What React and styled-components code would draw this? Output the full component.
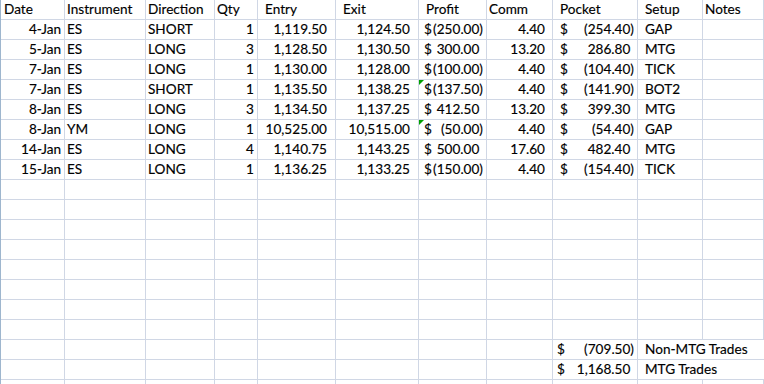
import React from 'react';
import styled, { createGlobalStyle } from 'styled-components';

const GlobalStyle = createGlobalStyle`
  html, body {
    margin: 0;
    padding: 0;
    background: #fff;
    overflow: hidden;
  }
`;

const COLS = '64px 81px 69px 43px 78px 83px 68px 66px 85px 65px 1fr';

const Sheet = styled.div`
  width: 764px;
  height: 384px;
  overflow: hidden;
  box-sizing: border-box;
  border-left: 1px solid #9eb6ce;
  font-family: Lato, "Liberation Sans", sans-serif;
  font-size: 13.6px;
  color: #000;
  -webkit-text-stroke: 0.15px #000;
`;

const Row = styled.div`
  display: grid;
  grid-template-columns: ${COLS};
  height: 20px;
`;

const Cell = styled.div`
  position: relative;
  box-sizing: border-box;
  height: 20px;
  line-height: 19px;
  white-space: nowrap;
  overflow: visible;
  border-bottom: 1px solid #d0d7e5;
  border-right: ${(p) => (p.$noRight ? 'none' : '1px solid #d0d7e5')};
  text-align: ${(p) => p.$align || 'left'};
  padding-left: ${(p) => p.$pl || 0}px;
  padding-right: ${(p) => p.$pr || 0}px;
  grid-column: ${(p) => (p.$span ? `span ${p.$span}` : 'auto')};
`;

const Acct = styled(Cell)`
  display: flex;
  justify-content: space-between;
`;

const Ghost = styled.span`
  visibility: hidden;
`;

const Flag = styled.span`
  position: absolute;
  top: 0;
  left: 0;
  width: 0;
  height: 0;
  border-top: 5px solid #00a000;
  border-right: 5px solid transparent;
`;

const headers = [
  { t: 'Date', pl: 3 },
  { t: 'Instrument', pl: 2 },
  { t: 'Direction', pl: 2 },
  { t: 'Qty', pl: 2 },
  { t: 'Entry', pl: 7 },
  { t: 'Exit', pl: 7 },
  { t: 'Profit', pl: 7 },
  { t: 'Comm', pl: 2 },
  { t: 'Pocket', pl: 7 },
  { t: 'Setup', pl: 7 },
  { t: 'Notes', pl: 2 },
];

const trades = [
  ['4-Jan', 'ES', 'SHORT', 1, '1,119.50', '1,124.50', '(250.00)', '4.40', '(254.40)', 'GAP'],
  ['5-Jan', 'ES', 'LONG', 3, '1,128.50', '1,130.50', '300.00', '13.20', '286.80', 'MTG'],
  ['7-Jan', 'ES', 'LONG', 1, '1,130.00', '1,128.00', '(100.00)', '4.40', '(104.40)', 'TICK'],
  ['7-Jan', 'ES', 'SHORT', 1, '1,135.50', '1,138.25', '(137.50)', '4.40', '(141.90)', 'BOT2', true],
  ['8-Jan', 'ES', 'LONG', 3, '1,134.50', '1,137.25', '412.50', '13.20', '399.30', 'MTG'],
  ['8-Jan', 'YM', 'LONG', 1, '10,525.00', '10,515.00', '(50.00)', '4.40', '(54.40)', 'GAP', true],
  ['14-Jan', 'ES', 'LONG', 4, '1,140.75', '1,143.25', '500.00', '17.60', '482.40', 'MTG'],
  ['15-Jan', 'ES', 'LONG', 1, '1,136.25', '1,133.25', '(150.00)', '4.40', '(154.40)', 'TICK'],
];

const Money = ({ value, pl, pr, flag }) => {
  const neg = value.startsWith('(');
  return (
    <Acct $pl={pl} $pr={pr}>
      {flag && <Flag />}
      <span>$</span>
      <span>
        {value}
        {!neg && <Ghost>)</Ghost>}
      </span>
    </Acct>
  );
};

const EmptyRow = () => (
  <Row>
    {headers.map((h) => (
      <Cell key={h.t} />
    ))}
  </Row>
);

const TradeRow = ({ trade }) => {
  const [date, inst, dir, qty, entry, exit, profit, comm, pocket, setup, flag] = trade;
  return (
    <Row>
      <Cell $align="right" $pr={3}>{date}</Cell>
      <Cell $pl={2}>{inst}</Cell>
      <Cell $pl={2}>{dir}</Cell>
      <Cell $align="right" $pr={3}>{qty}</Cell>
      <Cell $align="right" $pr={8}>{entry}</Cell>
      <Cell $align="right" $pr={8}>{exit}</Cell>
      <Money value={profit} pl={5} pr={3} flag={flag} />
      <Cell $align="right" $pr={7}>{comm}</Cell>
      <Money value={pocket} pl={7} pr={3} />
      <Cell $pl={7}>{setup}</Cell>
      <Cell $pl={2} />
    </Row>
  );
};

const SummaryRow = ({ value, label }) => (
  <Row>
    {headers.slice(0, 8).map((h) => (
      <Cell key={h.t} />
    ))}
    <Money value={value} pl={4} pr={3} />
    <Cell $pl={7} $span={2} $noRight>{label}</Cell>
  </Row>
);

export default function App() {
  return (
    <>
      <GlobalStyle />
      <Sheet>
        <Row>
          {headers.map((h) => (
            <Cell key={h.t} $pl={h.pl}>{h.t}</Cell>
          ))}
        </Row>
        {trades.map((t, i) => (
          <TradeRow key={i} trade={t} />
        ))}
        {Array.from({ length: 8 }, (_, i) => (
          <EmptyRow key={`e${i}`} />
        ))}
        <SummaryRow value="(709.50)" label="Non-MTG Trades" />
        <SummaryRow value="1,168.50" label="MTG Trades" />
        <EmptyRow />
      </Sheet>
    </>
  );
}
